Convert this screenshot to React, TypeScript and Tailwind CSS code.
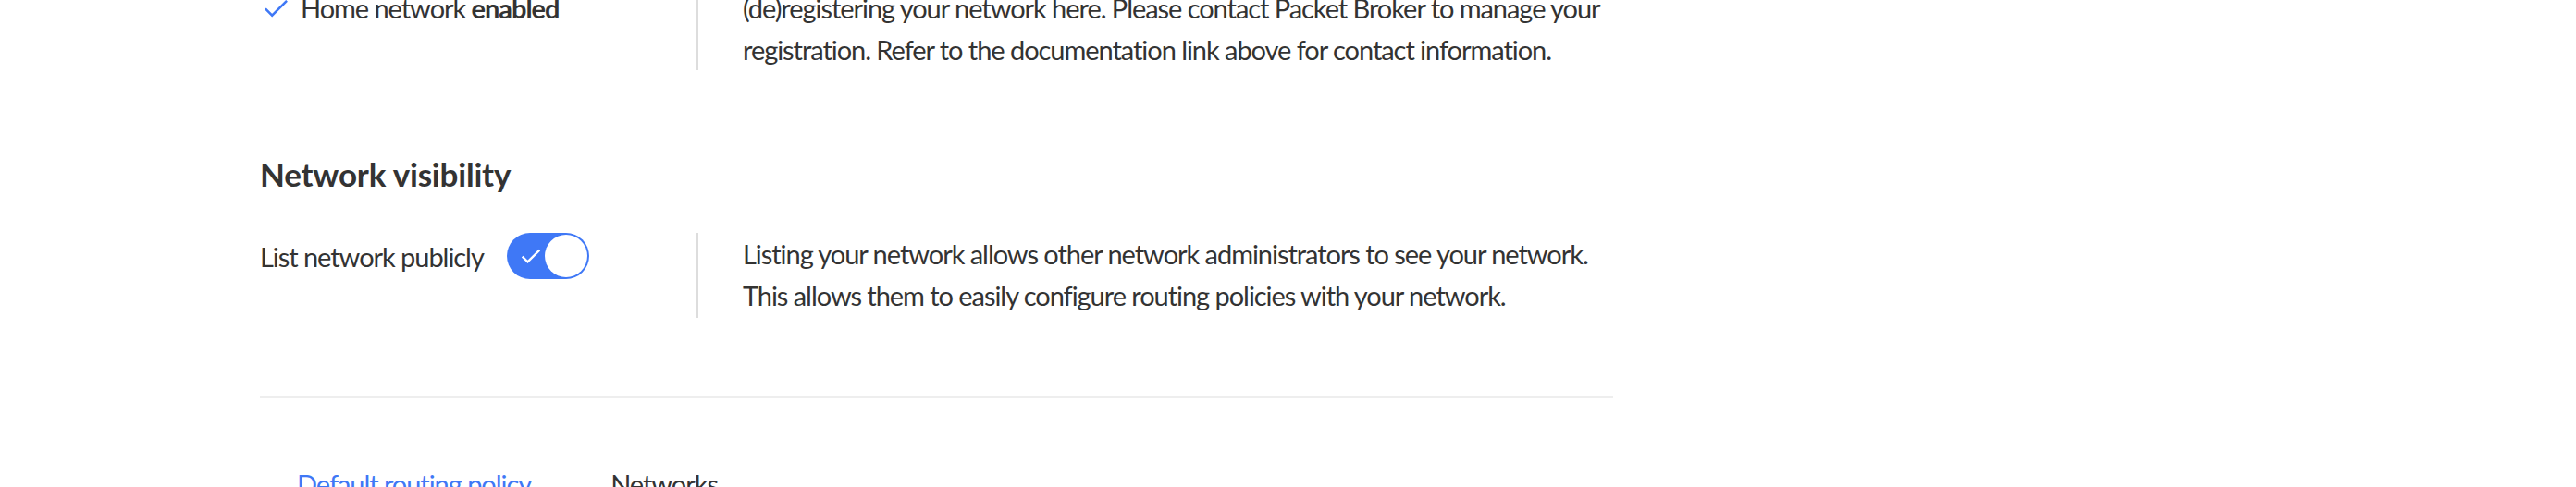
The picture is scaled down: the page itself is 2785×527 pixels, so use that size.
function Toggle({ checked }: { checked: boolean }) {
  return (
    <button
      type="button"
      role="switch"
      aria-checked={checked}
      className="flex h-[50px] w-[89px] shrink-0 items-center rounded-full bg-[#3f78f6] p-[2px]"
    >
      <svg viewBox="0 0 24 24" className="ml-[10px] h-[28px] w-[28px]" fill="none" stroke="white" strokeWidth="2">
        <path d="M4 12.5l5 5L20 6.5" />
      </svg>
      <span className="ml-auto h-[46px] w-[46px] rounded-full bg-white" />
    </button>
  );
}

export default function App() {
  return (
    <div className="h-[527px] overflow-hidden bg-white pl-[281px] font-['Lato',sans-serif] text-[29px] leading-[45px] tracking-[-1.05px] text-[#333333]">
      <div className="w-[1463px]">
        {/* Packet Broker registration (scrolled, top cut off) */}
        <div className="-mt-[14px] flex">
          <div className="flex w-[472px] shrink-0 items-start">
            <div className="flex items-center">
              <svg viewBox="0 0 28 20" className="ml-[4px] mr-[13px] h-[20px] w-[27px]" fill="none" stroke="#3f78f6" strokeWidth="2.6">
                <path d="M2 10.5l7.5 7.5L26 1.5" />
              </svg>
              <span>
                Home network <b className="font-bold">enabled</b>
              </span>
            </div>
          </div>
          <p className="whitespace-nowrap border-l-2 border-[#dddddd] pl-[48px]">
            (de)registering your network here. Please contact Packet Broker to manage your
            <br />
            registration. Refer to the documentation link above for contact information.
          </p>
        </div>

        {/* Network visibility */}
        <h2 className="mt-[92px] text-[35px] font-bold leading-[40px] tracking-[-0.2px]">Network visibility</h2>
        <div className="mt-[44px] flex">
          <div className="flex w-[472px] shrink-0 items-start">
            <div className="flex items-center gap-[25px]">
              <span>List network publicly</span>
              <Toggle checked />
            </div>
          </div>
          <p className="whitespace-nowrap border-l-2 border-[#dddddd] pb-[2px] pl-[48px]">
            Listing your network allows other network administrators to see your network.
            <br />
            This allows them to easily configure routing policies with your network.
          </p>
        </div>

        <hr className="mt-[85px] border-t-2 border-[#eeeeee]" />

        {/* Tabs */}
        <div className="mt-[70px] flex">
          <button type="button" className="px-[40px] text-[#3f78f6]">
            Default routing policy
          </button>
          <button type="button" className="px-[46px]">
            Networks
          </button>
        </div>
      </div>
    </div>
  );
}
